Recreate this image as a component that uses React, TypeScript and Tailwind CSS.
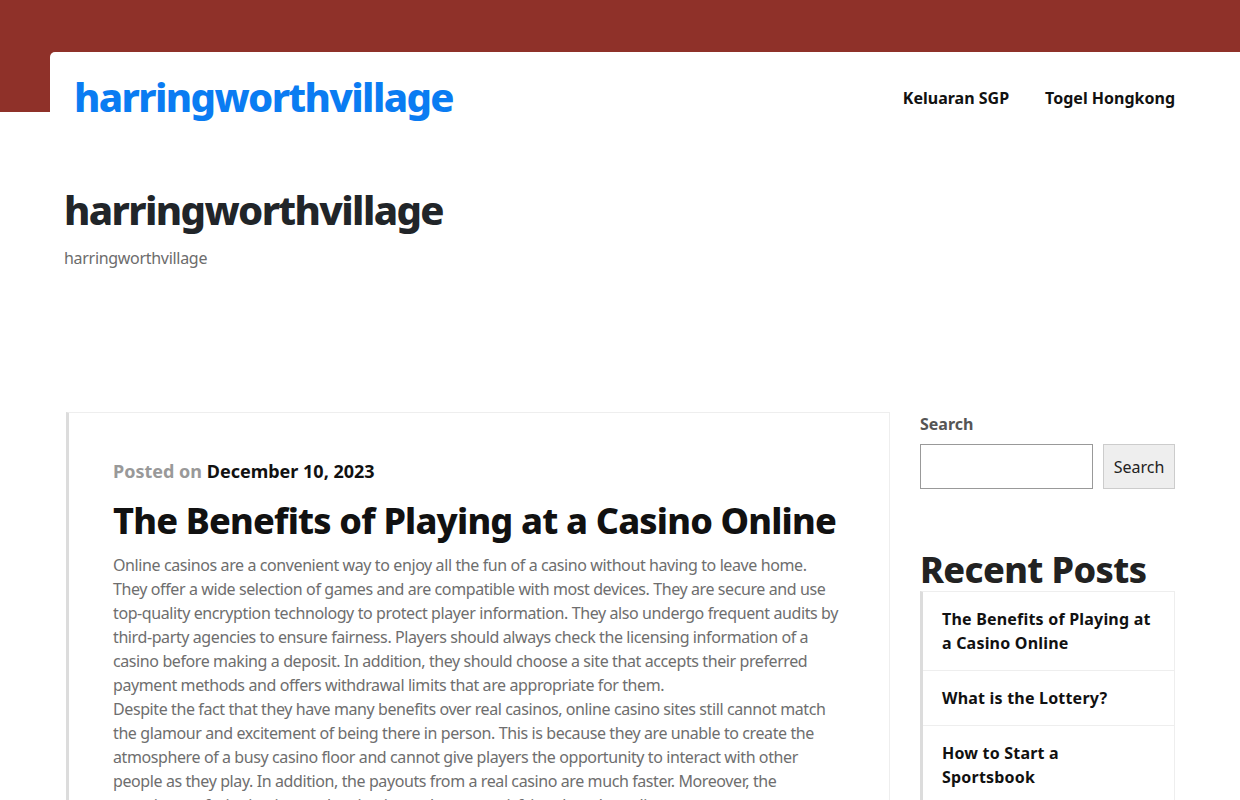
import React from 'react';

const FONT = "font-['Noto_Sans','Open_Sans',sans-serif]";

const recentPosts = [
    'The Benefits of Playing at a Casino Online',
    'What is the Lottery?',
    'How to Start a Sportsbook',
];

// lines kept as in the original layout so the wraps land on the same words
const paragraphs = [
    [
        'Online casinos are a convenient way to enjoy all the fun of a casino without having to leave home.',
        'They offer a wide selection of games and are compatible with most devices. They are secure and use',
        'top-quality encryption technology to protect player information. They also undergo frequent audits by',
        'third-party agencies to ensure fairness. Players should always check the licensing information of a',
        'casino before making a deposit. In addition, they should choose a site that accepts their preferred',
        'payment methods and offers withdrawal limits that are appropriate for them.',
    ],
    [
        'Despite the fact that they have many benefits over real casinos, online casino sites still cannot match',
        'the glamour and excitement of being there in person. This is because they are unable to create the',
        'atmosphere of a busy casino floor and cannot give players the opportunity to interact with other',
        'people as they play. In addition, the payouts from a real casino are much faster. Moreover, the',
        'experience of winning in a real casino is much more satisfying than the online one.',
    ],
];

function Header() {
    return (
        <header className="relative">
            <div className="h-[112px] bg-[#8f3129]" />
            <div className="absolute left-[50px] right-0 top-[52px] h-[92px] rounded-tl-[5px] bg-white">
                <div className="flex h-full items-start justify-between pl-[24px] pr-[65px] pt-[21px]">
                    <a className="text-[40px] font-extrabold leading-[48px] tracking-[-1.6px] text-[#0a7cf2]">harringworthvillage</a>
                    <nav className="flex gap-9 pt-[13px] text-[16px] font-bold text-[#111]">
                        <a>Keluaran SGP</a>
                        <a>Togel Hongkong</a>
                    </nav>
                </div>
            </div>
        </header>
    );
}

function Article() {
    return (
        <article className="border border-l-[3px] border-[#eeeeee] border-l-[#dcdcdc] pl-[44px] pr-[48px] pt-[46px] pb-10">
            <p className="text-[18px] font-bold leading-[24px] text-[#999]">
                Posted on <span className="text-[#111]">December 10, 2023</span>
            </p>
            <h2 className="mt-[14px] whitespace-nowrap text-[36px] font-extrabold leading-[48px] tracking-[-0.8px] text-[#111]">
                The Benefits of Playing at a Casino Online
            </h2>
            <div className="mt-[8px] text-[16px] leading-[24px] tracking-[-0.4px] text-[#6e6e6e]">
                {paragraphs.map((lines, i) => (
                    <p key={i}>
                        {lines.map((l) => (
                            <span key={l} className="block whitespace-nowrap">{l}</span>
                        ))}
                    </p>
                ))}
            </div>
        </article>
    );
}

function Sidebar() {
    return (
        <aside className="w-[255px] shrink-0">
            <label className="block text-[16px] font-bold leading-[24px] text-[#555]">Search</label>
            <div className="mt-[8px] flex gap-[10px]">
                <input className="h-[45px] w-[173px] border border-[#999] bg-white px-2 outline-none" />
                <button className="h-[45px] flex-1 border border-[#ccc] bg-[#eeeeee] text-[16px] text-[#222]">Search</button>
            </div>
            <h2 className="mt-[60px] text-[36px] font-extrabold leading-[42px] tracking-[-0.6px] text-[#222]">Recent Posts</h2>
            <ul className="border border-l-[3px] border-[#eeeeee] border-l-[#dcdcdc]">
                {recentPosts.map((t, i) => (
                    <li key={t} className={`pl-[19px] pr-[21px] py-[15px] text-[16px] font-bold leading-[24px] tracking-[0.2px] text-[#111] ${i > 0 ? 'border-t border-[#eeeeee]' : ''}`}>
                        {t}
                    </li>
                ))}
            </ul>
        </aside>
    );
}

export default function App() {
    return (
        <div className={`${FONT} min-h-screen bg-white`}>
            <Header />
            <section className="px-[64px] pt-[73px]">
                <h1 className="text-[40px] font-extrabold leading-[50px] tracking-[-1.6px] text-[#212529]">harringworthvillage</h1>
                <p className="mt-[11px] text-[16px] leading-[24px] tracking-[-0.3px] text-[#6c6c6c]">harringworthvillage</p>
            </section>
            <main className="flex gap-[30px] pl-[66px] pr-[65px] pt-[142px]">
                <div className="min-w-0 flex-1">
                    <Article />
                </div>
                <Sidebar />
            </main>
        </div>
    );
}
